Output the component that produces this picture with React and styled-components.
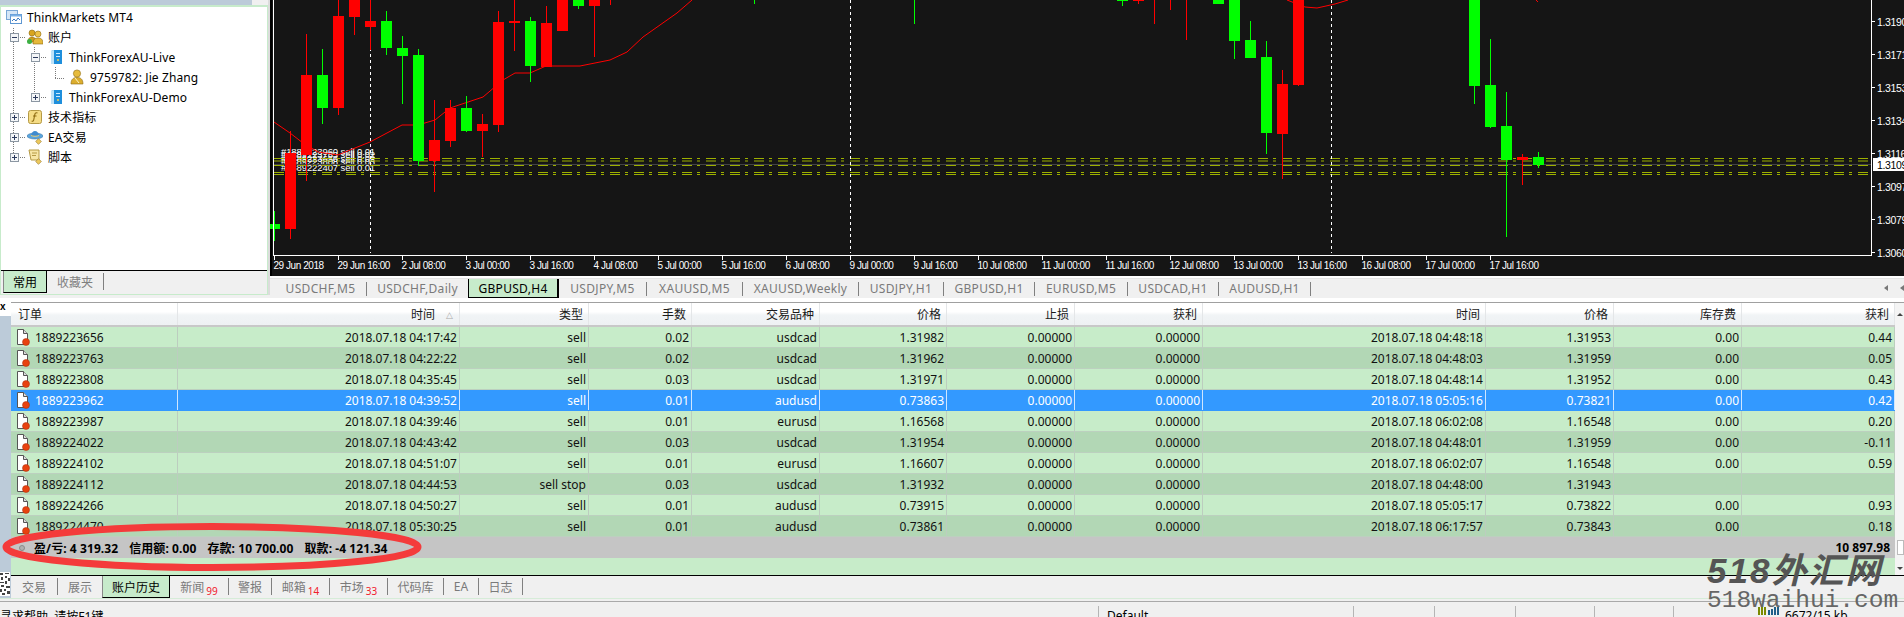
import React from 'react';
import styled, { createGlobalStyle } from 'styled-components';

const UP = '#00ff00';
const DOWN = '#ff0000';
const LEVEL = '#9db000';
const SANS = '"Noto Sans", "Noto Sans CJK SC", sans-serif';

const GlobalStyle = createGlobalStyle`
  html, body {
    margin: 0;
    padding: 0;
    background: #f0f0f0;
  }
`;

const Page = styled.div`
  width: 1904px;
  height: 617px;
  overflow: hidden;
  position: relative;
  display: flex;
  flex-direction: column;
  font-family: ${SANS};
  font-size: 12px;
  color: #000;
  background: #f0f0f0;
`;

const TopRow = styled.div`
  display: flex;
  height: 298px;
`;

/* navigator */
const NavPanel = styled.div`
  width: 270px;
  height: 295px;
  flex: none;
  display: flex;
  flex-direction: column;
  background: #f0f0f0;
  box-sizing: border-box;
  border-right: 2px solid #dcdcdc;
`;

const NavTitle = styled.div`
  height: 5px;
  flex: none;
  display: flex;
  background: #bccbd9;
  overflow: hidden;
  margin-right: 16px;
`;

const NavBody = styled.div`
  flex: 1;
  display: flex;
  flex-direction: column;
  border: 1px solid #c7ebcb;
  border-top-width: 2px;
`;

const Tree = styled.div`
  position: relative;
  height: 264px;
  flex: none;
  background: #fff;
  box-sizing: border-box;
  border-bottom: 1px solid #000;
`;

const TreeLines = styled.svg`
  position: absolute;
  left: -1px;
  top: -7px;
`;

const TreeRow = styled.div`
  height: 20px;
  display: flex;
  align-items: center;
  padding-left: ${p => p.$indent}px;
  position: relative;
  white-space: nowrap;
  letter-spacing: 0.1px;
`;

const TreeIcon = styled.svg`
  width: 16px;
  height: 16px;
  flex: none;
  margin-right: 5px;
`;

const Expander = styled.span`
  position: absolute;
  left: ${p => p.$left}px;
  top: 6px;
  width: 9px;
  height: 9px;
  box-sizing: border-box;
  border: 1px solid #8c97a3;
  background: #f4f6f8;
  &::before {
    content: '';
    position: absolute;
    left: 1px;
    top: 3px;
    width: 5px;
    height: 1px;
    background: #2c3a5c;
  }
  &::after {
    content: '';
    display: ${p => (p.$open ? 'none' : 'block')};
    position: absolute;
    left: 3px;
    top: 1px;
    width: 1px;
    height: 5px;
    background: #2c3a5c;
  }
`;

const NavTabs = styled.div`
  flex: 1;
  display: flex;
  align-items: flex-start;
`;

const NavTabActive = styled.div`
  width: 44px;
  height: 22px;
  margin-left: 2px;
  box-sizing: border-box;
  display: flex;
  align-items: center;
  justify-content: center;
  background: #c7ebcb;
  border-left: 1px solid #888;
  border-right: 1px solid #000;
  border-bottom: 1px solid #000;
`;

const NavTab = styled.div`
  height: 17px;
  margin-top: 2px;
  padding: 0 10px;
  display: flex;
  align-items: center;
  color: #808080;
  border-right: 1px solid #808080;
`;

/* chart */
const ChartColumn = styled.div`
  flex: 1;
  display: flex;
  flex-direction: column;
  min-width: 0;
`;

const ChartView = styled.div`
  height: 276px;
  flex: none;
  background: #000;
  border-bottom: 2px solid #fff;
  overflow: hidden;
`;

const ChartSvg = styled.svg`
  display: block;
  font-family: "Liberation Sans", sans-serif;
`;

const SymbolTabs = styled.div`
  height: 19px;
  flex: none;
  display: flex;
  align-items: center;
  padding-left: 5px;
  position: relative;
  background: #f0f0f0;
  border-top: 1px solid #e4e4e4;
`;

const SymbolTab = styled.div`
  width: ${p => p.$width}px;
  height: ${p => (p.$active ? 19 : 14)}px;
  flex: none;
  box-sizing: border-box;
  display: flex;
  align-items: center;
  justify-content: center;
  white-space: nowrap;
  letter-spacing: 0.3px;
  color: ${p => (p.$active ? '#000' : '#7a7a7a')};
  background: ${p => (p.$active ? '#c7ebcb' : 'transparent')};
  border-right: ${p => (p.$active ? '2px solid #000' : p.$plain ? 'none' : '1px solid #808080')};
  border-left: ${p => (p.$active ? '1px solid #000' : 'none')};
  border-bottom: ${p => (p.$active ? '1px solid #000' : 'none')};
`;

const ScrollArrow = styled.span`
  position: absolute;
  top: 6px;
  right: ${p => p.$right}px;
  width: 0;
  height: 0;
  border-top: 3px solid transparent;
  border-bottom: 3px solid transparent;
  border-right: 4px solid #777;
`;

/* terminal */
const Terminal = styled.div`
  flex: 1;
  display: flex;
  min-height: 0;
  background: #fff;
`;

const SideStrip = styled.div`
  width: 11px;
  flex: none;
  display: flex;
  flex-direction: column;
  background: #fff;
`;

const CloseMark = styled.div`
  height: 18px;
  padding-top: 1px;
  box-sizing: border-box;
  font: bold 10px/16px "Liberation Sans", sans-serif;
`;

const StripFill = styled.div`
  flex: 1;
  background: #bccbd9;
  display: flex;
  flex-direction: column;
  justify-content: flex-end;
`;

const QrBit = styled.svg`
  display: block;
  margin-bottom: 2px;
`;

const TableColumn = styled.div`
  flex: 1;
  display: flex;
  flex-direction: column;
  min-width: 0;
`;

const TableWrap = styled.div`
  flex: 1;
  margin-top: 4px;
  display: flex;
  border-top: 1px solid #a0a0a0;
  min-height: 0;
`;

const Table = styled.div`
  flex: 1;
  display: flex;
  flex-direction: column;
  background: #c7ecc9;
  min-width: 0;
`;

const COLUMNS = '167px 282px 129px 103px 128px 127px 128px 128px 283px 128px 128px 153px';

const HeaderRow = styled.div`
  display: grid;
  grid-template-columns: ${COLUMNS};
  height: 24px;
  flex: none;
  box-sizing: border-box;
  background: linear-gradient(#ffffff 0%, #ffffff 40%, #f1f4f6 55%, #eef1f3 100%);
  border-bottom: 2px solid #c8c8c8;
`;

const HeaderCell = styled.div`
  display: flex;
  align-items: center;
  justify-content: ${p => (p.$left ? 'flex-start' : 'flex-end')};
  padding: ${p => (p.$left ? '0 0 0 7px' : `0 ${p.$sorted ? 24 : 5}px 0 0`)};
  border-right: 1px solid #e4e6e8;
  position: relative;
  color: #1a1a1a;
`;

const SortMark = styled.span`
  position: absolute;
  right: 6px;
  top: 8px;
  font: 9px/9px "Liberation Sans", sans-serif;
  color: #aaa;
`;

const Row = styled.div`
  display: grid;
  grid-template-columns: ${COLUMNS};
  height: 21px;
  flex: none;
  box-sizing: border-box;
  border-bottom: 1px solid ${p => (p.$selected ? '#3399ff' : '#bcd0bf')};
  background: ${p => (p.$selected ? '#3399ff' : p.$dark ? '#b2d7b5' : '#c7ecc9')};
  color: ${p => (p.$selected ? '#fff' : '#111')};
`;

const Cell = styled.div`
  display: flex;
  align-items: center;
  justify-content: flex-end;
  padding-right: 2px;
  border-right: 1px solid ${p => (p.$selected ? '#cfe6ff' : '#bccdbf')};
  white-space: nowrap;
  overflow: hidden;
`;

const TicketCell = styled(Cell)`
  justify-content: flex-start;
  padding-left: 4px;
  gap: 4px;
`;

const DocIcon = styled.svg`
  width: 16px;
  height: 18px;
  flex: none;
`;

const TotalRow = styled.div`
  height: 21px;
  flex: none;
  display: flex;
  align-items: center;
  justify-content: space-between;
  padding: 0 5px 0 8px;
  background: #c5c5c5;
  font-weight: 700;
`;

const TotalGroup = styled.div`
  display: flex;
  align-items: center;
  gap: 11px;
  letter-spacing: 0.08px;
`;

const Dot = styled.span`
  width: 6px;
  height: 6px;
  box-sizing: border-box;
  margin-right: -2px;
  border-radius: 50%;
  border: 1px solid #8a8a8a;
  background: #b0b0b0;
`;

const Filler = styled.div`
  flex: 1;
`;

const ScrollBar = styled.div`
  width: 9px;
  flex: none;
  position: relative;
  background: #f4f4f4;
`;

const ScrollBtn = styled.span`
  position: absolute;
  left: 2px;
  ${p => (p.$up ? 'top: 10px;' : 'bottom: 5px;')}
  width: 0;
  height: 0;
  border-left: 3px solid transparent;
  border-right: 3px solid transparent;
  ${p => (p.$up ? 'border-bottom: 3px solid #444;' : 'border-top: 3px solid #444;')}
`;

const ScrollThumb = styled.span`
  position: absolute;
  left: 2px;
  right: 0;
  bottom: 20px;
  height: 13px;
  background: #fff;
  border: 1px solid #bbb;
`;

const BottomTabs = styled.div`
  height: 23px;
  flex: none;
  display: flex;
  align-items: flex-start;
  box-sizing: border-box;
  background: #f0f0f0;
  border-top: 1px solid #000;
`;

const BottomTab = styled.div`
  width: ${p => p.$width}px;
  height: ${p => (p.$active ? 22 : 17)}px;
  margin-top: ${p => (p.$active ? 0 : 2)}px;
  flex: none;
  box-sizing: border-box;
  display: flex;
  align-items: center;
  justify-content: center;
  white-space: nowrap;
  color: ${p => (p.$active ? '#000' : '#7a7a7a')};
  background: ${p => (p.$active ? '#c7ebcb' : 'transparent')};
  border-right: ${p => (p.$active ? '1px solid #000' : p.$plain ? 'none' : '1px solid #808080')};
  border-left: ${p => (p.$active ? '1px solid #888' : 'none')};
  border-bottom: ${p => (p.$active ? '1px solid #000' : 'none')};
`;

const Count = styled.span`
  color: #f0202c;
  font-size: 10px;
  line-height: 1;
  margin-left: 2px;
  position: relative;
  top: 4px;
`;

const Divider = styled.div`
  height: 4px;
  flex: none;
  background: #f0f0f0;
  border-bottom: 1px solid #a9a9a9;
  border-top: 1px solid #d6ecd8;
  box-sizing: border-box;
`;

const StatusBar = styled.div`
  height: 15px;
  flex: none;
  display: flex;
  background: #f0f0f0;
  overflow: hidden;
`;

const StatusCell = styled.div`
  width: ${p => p.$width}px;
  flex: none;
  box-sizing: border-box;
  margin-top: 4px;
  padding: 1px 0 0 ${p => p.$pad || 0}px;
  display: flex;
  gap: 4px;
  white-space: nowrap;
  border-right: ${p => (p.$plain ? 'none' : '1px solid #b5b5b5')};
`;

/* painted over the page in the screenshot */
const RedRing = styled.svg`
  position: absolute;
  left: 0;
  top: 520px;
`;

const Watermark = styled.div`
  position: absolute;
  left: 1707px;
  top: 551px;
  width: 197px;
  color: #555;
  pointer-events: none;
`;

const MarkBrand = styled.div`
  font: italic 700 35px/40px "Liberation Sans", "Noto Sans CJK SC", sans-serif;
  letter-spacing: 2px;
  white-space: nowrap;
`;

const MarkSite = styled.div`
  font: 24.5px/20px "Liberation Mono", monospace;
  color: #666;
  white-space: nowrap;
`;

const rows = [
  ['1889223656', '04:17:42', 'sell', '0.02', 'usdcad', '1.31982', '04:48:18', '1.31953', '0.00', '0.44'],
  ['1889223763', '04:22:22', 'sell', '0.02', 'usdcad', '1.31962', '04:48:03', '1.31959', '0.00', '0.05'],
  ['1889223808', '04:35:45', 'sell', '0.03', 'usdcad', '1.31971', '04:48:14', '1.31952', '0.00', '0.43'],
  ['1889223962', '04:39:52', 'sell', '0.01', 'audusd', '0.73863', '05:05:16', '0.73821', '0.00', '0.42'],
  ['1889223987', '04:39:46', 'sell', '0.01', 'eurusd', '1.16568', '06:02:08', '1.16548', '0.00', '0.20'],
  ['1889224022', '04:43:42', 'sell', '0.03', 'usdcad', '1.31954', '04:48:01', '1.31959', '0.00', '-0.11'],
  ['1889224102', '04:51:07', 'sell', '0.01', 'eurusd', '1.16607', '06:02:07', '1.16548', '0.00', '0.59'],
  ['1889224112', '04:44:53', 'sell stop', '0.03', 'usdcad', '1.31932', '04:48:00', '1.31943', '', ''],
  ['1889224266', '04:50:27', 'sell', '0.01', 'audusd', '0.73915', '05:05:17', '0.73822', '0.00', '0.93'],
  ['1889224470', '05:30:25', 'sell', '0.01', 'audusd', '0.73861', '06:17:57', '0.73843', '0.00', '0.18'],
];

const DARK_ROWS = [1, 5, 7, 9];

// [slot, colour, body top, body bottom, wick top, wick bottom]; x = 274.5 + 16 * slot
const candles = [
  [0, 'g', 224, 229, 211, 241], [1, 'r', 153, 229, 131, 239], [2, 'r', 75, 155, 34, 181],
  [3, 'g', 75, 108, 49, 124], [4, 'r', 16, 108, 0, 115], [5, 'r', 0, 17, 0, 35],
  [6, 'r', 21, 27, 0, 50], [7, 'g', 21, 48, 11, 55], [8, 'g', 48, 56, 36, 104],
  [9, 'g', 55, 161, 49, 166], [10, 'r', 140, 161, 100, 192], [11, 'r', 108, 141, 100, 147],
  [12, 'g', 108, 131, 96, 132], [13, 'r', 124, 131, 114, 157], [14, 'r', 22, 125, 11, 132],
  [15, 'r', 21, 23, 0, 51], [16, 'g', 21, 66, 17, 82], [17, 'r', 23, 67, 6, 67],
  [18, 'r', 0, 31, 0, 31], [19, 'g', 0, 6, 0, 9], [20, 'r', 0, 6, 0, 57], [21, 'r', 0, 0, 0, 5],
  [30, 'g', 0, 0, 0, 4], [40, 'g', 0, 0, 0, 24], [53, 'g', 0, 1, 0, 6], [54, 'r', 0, 1, 0, 4],
  [55, 'r', 0, 0, 0, 24], [56, 'r', 0, 0, 0, 10], [57, 'r', 0, 0, 0, 40], [59, 'g', 0, 4, 0, 4],
  [60, 'g', 0, 41, 0, 59], [61, 'g', 40, 58, 21, 58], [62, 'g', 57, 133, 41, 154],
  [63, 'r', 84, 134, 70, 179], [64, 'r', 0, 85, 0, 86], [75, 'g', 0, 86, 0, 104],
  [76, 'g', 85, 127, 39, 128], [77, 'g', 126, 160, 92, 237], [78, 'r', 157, 160, 154, 185],
  [79, 'g', 157, 165, 152, 168],
];

const timeLabels = [
  '29 Jun 2018', '29 Jun 16:00', '2 Jul 08:00', '3 Jul 00:00', '3 Jul 16:00', '4 Jul 08:00',
  '5 Jul 00:00', '5 Jul 16:00', '6 Jul 08:00', '9 Jul 00:00', '9 Jul 16:00', '10 Jul 08:00',
  '11 Jul 00:00', '11 Jul 16:00', '12 Jul 08:00', '13 Jul 00:00', '13 Jul 16:00', '16 Jul 08:00',
  '17 Jul 00:00', '17 Jul 16:00',
];

const priceLabels = [
  ['1.3190', 21], ['1.3171', 54], ['1.3153', 87], ['1.3134', 120],
  ['1.3116', 153], ['1.3097', 186], ['1.3079', 219], ['1.3060', 252],
];

const orderLabels = [
  ['#1889223960 sell 0.01', 155], ['#1889223763 sell 0.02', 158], ['#1889223656 sell 0.02', 162],
  ['#1889223808 sell 0.03', 165], ['#1889222407 sell 0.01', 171],
];

const levels = [158.5, 161, 165.5, 172.5, 174.5];

const movingAverage = '274,122 290,133 303,143 318,152 338,155 350,150 370,142 402,125 418,125 435,120 450,108 483,97 503,80 515,73 530,73 546,66 580,66 610,60 627,52 643,37 677,13 692,0';

const symbolTabs = [
  ['USDCHF,M5', 92], ['USDCHF,Daily', 101], ['GBPUSD,H4', 91], ['USDJPY,M5', 88], ['XAUUSD,M5', 96],
  ['XAUUSD,Weekly', 116], ['USDJPY,H1', 85], ['GBPUSD,H1', 91], ['EURUSD,M5', 93], ['USDCAD,H1', 91], ['AUDUSD,H1', 92],
];

const terminalTabs = [
  ['交易', 47], ['展示', 44], ['账户历史', 68], ['新闻', 59, '99'], ['警报', 43], ['邮箱', 58, '14'],
  ['市场', 58, '33'], ['代码库', 56], ['EA', 35], ['日志', 44],
];

const statusCells = [81, 81, 79, 79];

const Candle = ({ slot, up, bodyTop, bodyBottom, wickTop, wickBottom }) => {
  const x = 274.5 + 16 * slot;
  const color = up ? UP : DOWN;
  return (
    <g>
      <line x1={x} x2={x} y1={wickTop} y2={wickBottom} stroke={color} />
      {bodyBottom > bodyTop && <rect x={x - 5.5} y={bodyTop} width={11} height={bodyBottom - bodyTop} fill={color} />}
    </g>
  );
};

const PriceChart = () => (
  <ChartSvg width="1634" height="276" viewBox="270 0 1634 276">
    <rect x="272" y="0" width="1632" height="276" fill="#151515" />

    {orderLabels.map(([text, y]) => (
      <text key={y} x="281" y={y} fontSize="9.5" fill="#fff" letterSpacing="-0.1">{text}</text>
    ))}

    {levels.map(y => (
      <line key={y} x1="274" x2="1871" y1={y} y2={y} stroke={LEVEL} strokeDasharray="10 5 3 6" />
    ))}
    <line x1="274" x2="1871" y1="164.5" y2="164.5" stroke="#444" />

    {[370.5, 850.5, 1331.5].map(x => (
      <line key={x} x1={x} x2={x} y1="0" y2="253" stroke="#fff" strokeDasharray="3 3" />
    ))}

    <polyline points={movingAverage} fill="none" stroke={DOWN} />
    <polyline points="1287,0 1305,7 1317,8 1335,4 1348,0" fill="none" stroke={DOWN} />
    <polyline points="1536,0 1538,2" fill="none" stroke={DOWN} />

    {candles.map(([slot, c, bt, bb, wt, wb]) => (
      <Candle key={slot} slot={slot} up={c === 'g'} bodyTop={bt} bodyBottom={bb} wickTop={wt} wickBottom={wb} />
    ))}

    <line x1="273.5" x2="273.5" y1="0" y2="255" stroke="#fff" />
    <line x1="273" x2="1871" y1="255.5" y2="255.5" stroke="#fff" />
    <line x1="1871.5" x2="1871.5" y1="0" y2="256" stroke="#fff" />

    {timeLabels.map((label, i) => {
      const x = 274.5 + 64 * i;
      return (
        <g key={label}>
          <line x1={x} x2={x} y1="256" y2="260" stroke="#fff" />
          <text x={x - 1} y="269" fontSize="10" letterSpacing="-0.45" fill="#fff">{label}</text>
        </g>
      );
    })}

    {priceLabels.map(([label, y]) => (
      <g key={label}>
        <line x1="1872" x2="1875" y1={y + 0.5} y2={y + 0.5} stroke="#fff" />
        <text x="1877" y={y + 4.5} fontSize="10.5" letterSpacing="-0.38" fill="#fff">{label}</text>
      </g>
    ))}
    <rect x="1873" y="158" width="31" height="13" fill="#fff" />
    <text x="1877" y="168.5" fontSize="10.5" letterSpacing="-0.38" fill="#000">1.3109</text>
  </ChartSvg>
);

const TerminalIcon = () => (
  <TreeIcon viewBox="0 0 16 16">
    <rect x="0.5" y="1.5" width="11" height="9" fill="#d5e6f7" stroke="#7aa7d6" />
    <rect x="4.5" y="5.5" width="11" height="9" fill="#fff" stroke="#5f97d2" />
    <rect x="4.5" y="5.5" width="11" height="2" fill="#7ab0e6" />
    <path d="M6 12 l2-2 2 2 2-3 2 2" fill="none" stroke="#3a78c0" />
  </TreeIcon>
);

const PeopleIcon = () => (
  <TreeIcon viewBox="0 0 16 16">
    <circle cx="5" cy="4" r="3" fill="#d8a520" stroke="#8d6a10" strokeWidth=".6" />
    <path d="M1 13c0-4 2-5 4-5s4 1 4 5z" fill="#c99a1e" stroke="#8d6a10" strokeWidth=".6" />
    <circle cx="11" cy="5" r="3" fill="#eec347" stroke="#8d6a10" strokeWidth=".6" />
    <path d="M6 15c0-5 2-6 5-6s5 1 5 6z" fill="#e6b93a" stroke="#8d6a10" strokeWidth=".6" />
    <circle cx="2.5" cy="12.5" r="2.5" fill="#3cb043" />
  </TreeIcon>
);

const ServerIcon = () => (
  <TreeIcon viewBox="0 0 16 16">
    <path d="M3 2l3-1h8v14H3z" fill="#1f8fdc" />
    <path d="M3 2l3-1v14H3z" fill="#bfe2f8" />
    <rect x="8" y="4" width="4" height="1" fill="#cdeaff" />
    <rect x="8" y="7" width="4" height="1" fill="#cdeaff" />
    <circle cx="10" cy="11" r="1" fill="#ffcf4a" />
  </TreeIcon>
);

const PersonIcon = () => (
  <TreeIcon viewBox="0 0 16 16">
    <circle cx="8" cy="4.5" r="3.6" fill="#e6bb3c" stroke="#8d6a10" strokeWidth=".6" />
    <path d="M2 15c0-5 2.5-6.5 6-6.5s6 1.5 6 6.5z" fill="#dcae2e" stroke="#8d6a10" strokeWidth=".6" />
    <path d="M6 9l4 5" stroke="#fff3c4" />
  </TreeIcon>
);

const FunctionIcon = () => (
  <TreeIcon viewBox="0 0 16 16">
    <rect x="1.5" y="1.5" width="13" height="13" rx="2" fill="#f5dc85" stroke="#b59a45" />
    <path d="M10.5 4c-2-.8-2.5.5-2.800 2l-1 5c-.2 1-.9 1.500-2 1M6 7h3.500" fill="none" stroke="#8d6a10" strokeWidth="1.1" />
  </TreeIcon>
);

const AdvisorIcon = () => (
  <TreeIcon viewBox="0 0 16 16">
    <ellipse cx="8" cy="7" rx="8" ry="3" fill="#5aa4dc" stroke="#2f6ea3" strokeWidth=".5" />
    <path d="M4 7c0-3 2-5 4-5s4 2 4 5z" fill="#3f8bcf" />
    <path d="M4 6.5c2 1 6 1 8 0" stroke="#f0d070" fill="none" />
    <rect x="9.5" y="10.5" width="4" height="4" transform="rotate(45 11.5 12.5)" fill="#ecc95c" stroke="#99782a" strokeWidth=".6" />
  </TreeIcon>
);

const ScriptIcon = () => (
  <TreeIcon viewBox="0 0 16 16">
    <path d="M2 1h10v10H4z" fill="#f7e6a6" stroke="#b59a45" />
    <path d="M5 4h5M5 6.5h4" stroke="#b59a45" />
    <rect x="9.5" y="10.5" width="4" height="4" transform="rotate(45 11.5 12.5)" fill="#ecc95c" stroke="#99782a" strokeWidth=".6" />
  </TreeIcon>
);

const OrderIcon = () => (
  <DocIcon viewBox="0 0 16 18">
    <path d="M2.5 1.5h6l4 4v11h-10z" fill="#fff" stroke="#555" />
    <path d="M8.5 1.5v4h4" fill="#ddd" stroke="#555" />
    <circle cx="11" cy="14" r="3.5" fill="#e8420f" stroke="#a82a08" strokeWidth=".5" />
  </DocIcon>
);

const Navigator = () => (
  <NavPanel>
    <NavTitle />
    <NavBody>
      <Tree>
        <TreeLines width="110" height="170">
          <g stroke="#7a7a7a" strokeDasharray="1 1" fill="none">
            <path d="M13.5 28V157M18 37.5h8M18 117.5h8M18 137.5h8M18 157.5h8" />
            <path d="M34.5 47V97M39 57.5h8M39 97.5h8" />
            <path d="M55.5 67V78M55 78.5h10" />
          </g>
        </TreeLines>
        <TreeRow $indent={5}><TerminalIcon />ThinkMarkets MT4</TreeRow>
        <TreeRow $indent={26}><Expander $left={9} $open /><PeopleIcon />账户</TreeRow>
        <TreeRow $indent={47}><Expander $left={30} $open /><ServerIcon />ThinkForexAU-Live</TreeRow>
        <TreeRow $indent={68}><PersonIcon />9759782: Jie Zhang</TreeRow>
        <TreeRow $indent={47}><Expander $left={30} /><ServerIcon />ThinkForexAU-Demo</TreeRow>
        <TreeRow $indent={26}><Expander $left={9} /><FunctionIcon />技术指标</TreeRow>
        <TreeRow $indent={26}><Expander $left={9} /><AdvisorIcon />EA交易</TreeRow>
        <TreeRow $indent={26}><Expander $left={9} /><ScriptIcon />脚本</TreeRow>
      </Tree>
      <NavTabs>
        <NavTabActive>常用</NavTabActive>
        <NavTab>收藏夹</NavTab>
      </NavTabs>
    </NavBody>
  </NavPanel>
);

const HistoryTable = () => (
  <Table>
    <HeaderRow>
      <HeaderCell $left>订单</HeaderCell>
      <HeaderCell $sorted>时间<SortMark>△</SortMark></HeaderCell>
      {['类型', '手数', '交易品种', '价格', '止损', '获利', '时间', '价格', '库存费', '获利'].map((label, i) => (
        <HeaderCell key={i}>{label}</HeaderCell>
      ))}
    </HeaderRow>
    {rows.map(([ticket, open, type, lots, symbol, price, close, closePrice, swap, profit], i) => {
      const selected = i === 3;
      const cells = [`2018.07.18 ${open}`, type, lots, symbol, price, '0.00000', '0.00000', `2018.07.18 ${close}`, closePrice, swap, profit];
      return (
        <Row key={ticket} $selected={selected} $dark={DARK_ROWS.includes(i)}>
          <TicketCell $selected={selected}><OrderIcon />{ticket}</TicketCell>
          {cells.map((value, c) => <Cell key={c} $selected={selected}>{value}</Cell>)}
        </Row>
      );
    })}
    <TotalRow>
      <TotalGroup>
        <Dot />
        <span>盈/亏: 4 319.32</span>
        <span>信用额: 0.00</span>
        <span>存款: 10 700.00</span>
        <span>取款: -4 121.34</span>
      </TotalGroup>
      <span>10 897.98</span>
    </TotalRow>
    <Filler />
  </Table>
);

export default function App() {
  return (
    <Page>
      <GlobalStyle />
      <TopRow>
        <Navigator />
        <ChartColumn>
          <ChartView><PriceChart /></ChartView>
          <SymbolTabs>
            {symbolTabs.map(([name, width], i) => (
              <SymbolTab key={name} $width={width} $active={i === 2} $plain={i === 1}>{name}</SymbolTab>
            ))}
            <ScrollArrow $right={16} />
            <ScrollArrow $right={0} />
          </SymbolTabs>
        </ChartColumn>
      </TopRow>

      <Terminal>
        <SideStrip>
          <CloseMark>x</CloseMark>
          <StripFill>
            <QrBit width="10" height="24" viewBox="0 0 10 24">
              <rect width="10" height="24" fill="#fff" />
              <path d="M0 1h3v2H0zM5 1h4v1H5zM1 5h2v3H1zM5 4h2v2H5zM8 6h2v3H8zM0 10h4v1H0zM5 9h2v3H5zM1 13h3v2H1zM6 14h4v2H6zM0 17h2v3H0zM4 17h2v2H4zM7 19h3v3H7zM2 21h3v2H2z" fill="#444" />
            </QrBit>
          </StripFill>
        </SideStrip>
        <TableColumn>
          <TableWrap>
            <HistoryTable />
            <ScrollBar>
              <ScrollBtn $up />
              <ScrollThumb />
              <ScrollBtn />
            </ScrollBar>
          </TableWrap>
          <BottomTabs>
            {terminalTabs.map(([name, width, count], i) => (
              <BottomTab key={name} $width={width} $active={i === 2} $plain={i === 1}>
                {name}{count && <Count>{count}</Count>}
              </BottomTab>
            ))}
          </BottomTabs>
        </TableColumn>
      </Terminal>
      <Divider />
      <StatusBar>
        <StatusCell $width={1099}>寻求帮助, 请按F1键</StatusCell>
        <StatusCell $width={255} $pad={8}>Default</StatusCell>
        {statusCells.map((w, i) => <StatusCell key={i} $width={w} />)}
        <StatusCell $width={230} $pad={84} $plain>
          <svg width="23" height="8" viewBox="0 0 23 8">
            <path d="M0 0h2v8H0zM3 0h2v8H3zM6 0h2v8H6z" fill="#7a8a00" />
            <path d="M10 3h2v5h-2zM13 2h2v6h-2zM16 0h2v8h-2zM19 0h2v8h-2z" fill="#1f5f8a" />
          </svg>
          6672/15 kb
        </StatusCell>
      </StatusBar>

      <RedRing width="430" height="56" viewBox="0 0 430 56">
        <ellipse cx="212" cy="27" rx="206" ry="20.5" fill="none" stroke="#f43b3b" strokeWidth="7" />
      </RedRing>
      <Watermark>
        <MarkBrand>518外汇网</MarkBrand>
        <MarkSite>518waihui.com</MarkSite>
      </Watermark>
    </Page>
  );
}
